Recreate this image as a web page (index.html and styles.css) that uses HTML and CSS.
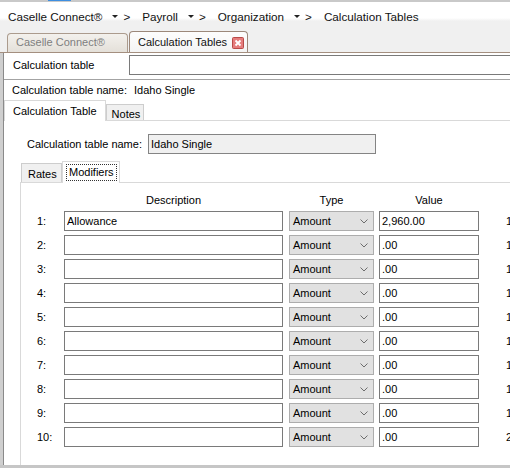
FILE: index.html
```html
<!DOCTYPE html>
<html lang="en">
<head>
  <meta charset="UTF-8">
  <title>Calculation Tables</title>
  <link rel="stylesheet" href="styles.css">
</head>
<body>
  <div class="topline"><span class="topmark"></span></div>

  <div class="crumbs">
    <span>Caselle Connect®</span><span class="caret"></span><span class="sep">&gt;</span>
    <span>Payroll</span><span class="caret"></span><span class="sep">&gt;</span>
    <span>Organization</span><span class="caret"></span><span class="sep">&gt;</span>
    <span>Calculation Tables</span>
  </div>

  <div class="doctabs">
    <div class="doctab">Caselle Connect®</div>
    <div class="doctab active">
      <span>Calculation Tables</span>
      <svg class="close" width="12" height="12" viewBox="0 0 12 12">
        <rect x="0.5" y="0.5" width="11" height="11" rx="1" fill="#e57c7c" stroke="#b94a48"/>
        <path d="M3.5 3.5 L8.5 8.5 M8.5 3.5 L3.5 8.5" stroke="#fff" stroke-width="1.8"/>
      </svg>
    </div>
  </div>

  <div class="main">
    <div class="lookup">
      <label>Calculation table</label>
      <input type="text" class="box wide" value="">
    </div>
    <div class="namerow">Calculation table name:<span class="nameval">Idaho Single</span></div>

    <div class="tabs">
      <span class="tab on">Calculation Table</span>
      <span class="tab notes">Notes</span>
    </div>

    <div class="panel">
      <div class="field">
        <label>Calculation table name:</label>
        <input type="text" class="box ro" value="Idaho Single" readonly>
      </div>

      <div class="tabs sub">
        <span class="tab rates">Rates</span>
        <span class="tab on mods"><span class="focus">Modifiers</span></span>
      </div>

      <div class="subpanel">
        <div class="grid">
          <span></span>
          <span class="head desc-h">Description</span>
          <span class="head type-h">Type</span>
          <span class="head val-h">Value</span>
          <span></span>

          <span class="num">1:</span>
          <input type="text" class="box desc" value="Allowance">
          <div class="select"><span>Amount</span><svg width="8" height="5" viewBox="0 0 8 5"><path d="M0.5 0.5 L4 4 L7.5 0.5" fill="none" stroke="#6d6d6d"/></svg></div>
          <input type="text" class="box val" value="2,960.00">
          <span class="cut">1</span>

          <span class="num">2:</span>
          <input type="text" class="box desc" value="">
          <div class="select"><span>Amount</span><svg width="8" height="5" viewBox="0 0 8 5"><path d="M0.5 0.5 L4 4 L7.5 0.5" fill="none" stroke="#6d6d6d"/></svg></div>
          <input type="text" class="box val" value=".00">
          <span class="cut">1</span>

          <span class="num">3:</span>
          <input type="text" class="box desc" value="">
          <div class="select"><span>Amount</span><svg width="8" height="5" viewBox="0 0 8 5"><path d="M0.5 0.5 L4 4 L7.5 0.5" fill="none" stroke="#6d6d6d"/></svg></div>
          <input type="text" class="box val" value=".00">
          <span class="cut">1</span>

          <span class="num">4:</span>
          <input type="text" class="box desc" value="">
          <div class="select"><span>Amount</span><svg width="8" height="5" viewBox="0 0 8 5"><path d="M0.5 0.5 L4 4 L7.5 0.5" fill="none" stroke="#6d6d6d"/></svg></div>
          <input type="text" class="box val" value=".00">
          <span class="cut">1</span>

          <span class="num">5:</span>
          <input type="text" class="box desc" value="">
          <div class="select"><span>Amount</span><svg width="8" height="5" viewBox="0 0 8 5"><path d="M0.5 0.5 L4 4 L7.5 0.5" fill="none" stroke="#6d6d6d"/></svg></div>
          <input type="text" class="box val" value=".00">
          <span class="cut">1</span>

          <span class="num">6:</span>
          <input type="text" class="box desc" value="">
          <div class="select"><span>Amount</span><svg width="8" height="5" viewBox="0 0 8 5"><path d="M0.5 0.5 L4 4 L7.5 0.5" fill="none" stroke="#6d6d6d"/></svg></div>
          <input type="text" class="box val" value=".00">
          <span class="cut">1</span>

          <span class="num">7:</span>
          <input type="text" class="box desc" value="">
          <div class="select"><span>Amount</span><svg width="8" height="5" viewBox="0 0 8 5"><path d="M0.5 0.5 L4 4 L7.5 0.5" fill="none" stroke="#6d6d6d"/></svg></div>
          <input type="text" class="box val" value=".00">
          <span class="cut">1</span>

          <span class="num">8:</span>
          <input type="text" class="box desc" value="">
          <div class="select"><span>Amount</span><svg width="8" height="5" viewBox="0 0 8 5"><path d="M0.5 0.5 L4 4 L7.5 0.5" fill="none" stroke="#6d6d6d"/></svg></div>
          <input type="text" class="box val" value=".00">
          <span class="cut">1</span>

          <span class="num">9:</span>
          <input type="text" class="box desc" value="">
          <div class="select"><span>Amount</span><svg width="8" height="5" viewBox="0 0 8 5"><path d="M0.5 0.5 L4 4 L7.5 0.5" fill="none" stroke="#6d6d6d"/></svg></div>
          <input type="text" class="box val" value=".00">
          <span class="cut">1</span>

          <span class="num">10:</span>
          <input type="text" class="box desc" value="">
          <div class="select"><span>Amount</span><svg width="8" height="5" viewBox="0 0 8 5"><path d="M0.5 0.5 L4 4 L7.5 0.5" fill="none" stroke="#6d6d6d"/></svg></div>
          <input type="text" class="box val" value=".00">
          <span class="cut">2</span>
        </div>
      </div>
    </div>
  </div>

  <div class="bottomline"></div>
</body>
</html>
```

FILE: styles.css
```css
body { margin: 0; width: 510px; height: 468px; overflow: hidden; background: #f0f0f0; font-family: "Liberation Sans", Arial, sans-serif; font-size: 11px; color: #000; }

/* window chrome */
.topline { height: 2px; background: #c9c9c9; }
.topmark { display: block; margin-left: 48px; width: 23px; height: 1px; background: #3d8ee0; }
.bottomline { height: 3px; background: #c6c6c6; }

/* breadcrumb */
.crumbs { height: 24px; padding: 2px 0 0 8px; display: flex; align-items: center; background: linear-gradient(#fff 0, #fff 16px, #f0f0f0 19px); font-size: 11.7px; color: #111; white-space: nowrap; }
.caret { width: 0; height: 0; margin: 1px 5px 0 10px; border-left: 3px solid transparent; border-right: 3px solid transparent; border-top: 3px solid #222; }
.sep { margin-right: 12px; }

/* document tabs */
.doctabs { height: 24px; padding-left: 7px; display: flex; align-items: flex-end; gap: 1px; border-bottom: 1px solid #a48f7f; }
.doctab { box-sizing: border-box; height: 19px; width: 121px; padding: 0 0 3px 8px; display: flex; align-items: flex-end; line-height: 13px; border: 1px solid #ab9b8d; border-bottom: none; border-radius: 4px 4px 0 0; background: linear-gradient(#f3f1ed, #e4e0d9); color: #7e7e7e; white-space: nowrap; }
.doctab.active { height: 21px; width: 119px; padding-right: 3px; justify-content: space-between; align-items: flex-end; background: linear-gradient(#fdfdfd, #f4f4f4); color: #111; border-color: #9c887a; }

/* main form area */
.main { width: 510px; height: 412px; padding-left: 1px; display: flex; flex-direction: column; background: #fff; border-left: 3px solid #cfcfcf; box-shadow: inset 1px 0 0 #8a8a8a; }
.lookup { height: 24px; padding-top: 2px; display: flex; align-items: flex-start; border-bottom: 1px solid #a3a3a3; }
.lookup label { width: 117px; padding-left: 9px; line-height: 20px; }
.box { box-sizing: border-box; height: 20px; margin: 0; padding: 0 2px; border: 1px solid #7a7a7a; background: #fff; font-family: inherit; font-size: 11px; color: #000; outline: none; }
.wide { width: 390px; }
.namerow { height: 20px; line-height: 20px; padding-left: 8px; }
.nameval { margin-left: 7px; }

/* tabs */
.tabs { height: 20px; display: flex; align-items: flex-end; border-bottom: 1px solid #d9d9d9; }
.tab { box-sizing: border-box; height: 16px; line-height: 14px; padding: 0 5px; border: 1px solid #cdcdcd; border-bottom: none; background: #f0f0f0; white-space: nowrap; }
.tab.on { height: 21px; margin-bottom: -1px; padding: 3px 8px 0 8px; background: #fff; border-color: #d9d9d9; }
.notes { width: 38px; padding-top: 2px; }

.panel { flex: 1; display: flex; flex-direction: column; padding: 13px 0 0 16px; }
.field { display: flex; margin-left: 7px; }
.field label { width: 121px; line-height: 20px; }
.ro { width: 228px; background: #f0f0f0; border-color: #848484; }

.tabs.sub { height: 21px; margin-top: 7px; }
.tabs.sub > .tab:first-child { margin-left: 1px; }
.rates { width: 41px; height: 19px; padding: 3px 0 0 6px; }
.tab.on.mods { width: 58px; height: 22px; padding: 2px 2px 0 3px; }
.focus { display: inline-block; padding: 1px 2px 1px 2px; border: 1px dotted #333; line-height: 13px; }

.subpanel { flex: 1; padding: 11px 0 0 16px; border-left: 1px solid #d9d9d9; }

/* modifiers grid */
.grid { display: grid; grid-template-columns: 27px 219px 91px 105px auto; grid-template-rows: 13px; grid-auto-rows: 20px; row-gap: 4px; }
.head { line-height: 13px; text-align: center; }
.type-h { width: 85px; justify-self: end; }
.val-h { width: 100px; justify-self: end; }
.num { line-height: 20px; }
.desc { width: 219px; }
.select { box-sizing: border-box; width: 85px; height: 20px; justify-self: end; display: flex; align-items: center; justify-content: space-between; padding: 0 5px 0 3px; border: 1px solid #adadad; background: #e1e1e1; }
.val { width: 100px; justify-self: end; }
.cut { padding-left: 27px; line-height: 20px; white-space: nowrap; }
```
